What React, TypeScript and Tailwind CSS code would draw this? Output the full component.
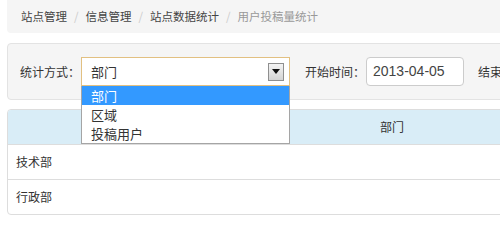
import React from "react";

const cjk = { fontFamily: '"Noto Sans CJK SC", "Liberation Sans", sans-serif' };

export default function App() {
  return (
    <div className="w-[500px] h-[224px] overflow-hidden bg-white text-[#333]" style={cjk}>
      <div className="pl-[7px] w-[900px]">
        {/* breadcrumb */}
        <div className="h-[33px] bg-[#f5f5f5] rounded-b-[4px] flex items-center pl-[14px] text-[11.5px]">
          <span className="text-[#444]">站点管理</span>
          <span className="text-[#ccc] px-[7px]">/</span>
          <span className="text-[#444]">信息管理</span>
          <span className="text-[#ccc] px-[7px]">/</span>
          <span className="text-[#444]">站点数据统计</span>
          <span className="text-[#ccc] px-[7px]">/</span>
          <span className="text-[#999]">用户投稿量统计</span>
        </div>

        {/* filter panel */}
        <div className="mt-[10px] h-[57px] bg-[#f5f5f5] border border-[#e3e3e3] rounded-[4px] flex items-center pl-[12px] text-[12px] relative z-10">
          <span className="w-[61px]">统计方式：</span>
          <div className="relative">
            <div className="w-[209px] h-[29px] bg-white border border-[#e2c081] flex items-center justify-between pl-[9px] pr-[5px] text-[13px]">
              <span>部门</span>
              <div className="w-[16px] h-[18px] border border-[#8f8f8f] bg-gradient-to-b from-[#f4f4f4] to-[#d4d4d4] flex items-center justify-center">
                <svg width="8" height="5" viewBox="0 0 8 5">
                  <polygon points="0,0 8,0 4,5" fill="#111" />
                </svg>
              </div>
            </div>
            <div className="absolute left-0 top-[29px] w-[209px] bg-white border border-t-0 border-[#a5a5a5] text-[13px] leading-[17px]">
              <div className="h-[19px] bg-[#3399ff] text-white pl-[9px] flex items-center">部门</div>
              <div className="h-[19px] pl-[9px] flex items-center">区域</div>
              <div className="h-[19px] pl-[9px] flex items-center">投稿用户</div>
            </div>
          </div>
          <span className="ml-[15px] w-[61px]">开始时间：</span>
          <div
            className="w-[98px] h-[29px] bg-white border border-[#ccc] rounded-[4px] flex items-center pl-[6px] text-[14px] text-[#444]"
            style={{ fontFamily: '"Liberation Sans", sans-serif' }}
          >
            2013-04-05
          </div>
          <span className="ml-[14px]">结束时间：</span>
        </div>

        {/* table */}
        <div className="mt-[9px] w-[770px] border border-[#ddd] rounded-[4px] overflow-hidden text-[12px]">
          <div className="h-[35px] bg-[#d9edf7] flex items-center justify-center border-b border-[#ddd]">部门</div>
          <div className="h-[35px] flex items-center pl-[8px] border-b border-[#ddd]">技术部</div>
          <div className="h-[34px] flex items-center pl-[8px]">行政部</div>
        </div>
      </div>
    </div>
  );
}
